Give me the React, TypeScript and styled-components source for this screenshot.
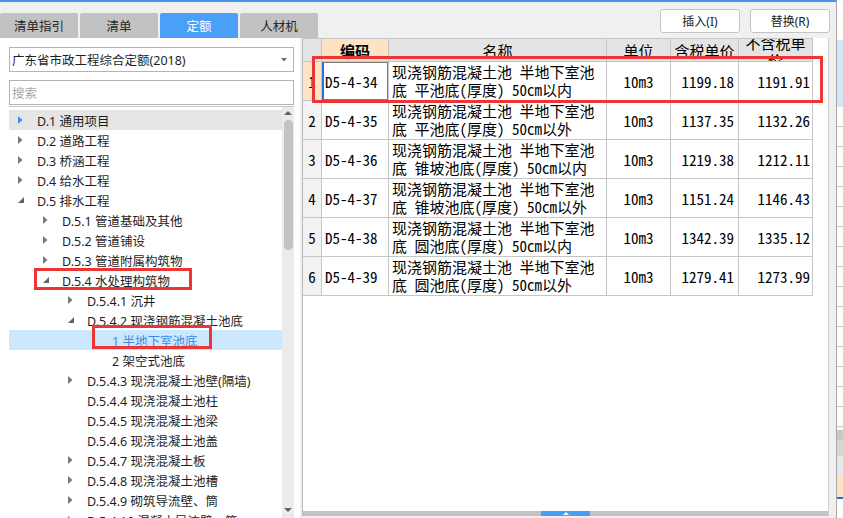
import React from "react";
import styled, { createGlobalStyle } from "styled-components";

const UI_FONT = `"Noto Sans", "Noto Sans CJK SC", sans-serif`;
const GRID_FONT = `"Noto Sans CJK SC", "Liberation Mono", monospace`;

const GlobalStyle = createGlobalStyle`
  html, body {
    margin: 0;
    padding: 0;
    overflow: hidden;
    background: #ffffff;
  }
  * {
    box-sizing: border-box;
  }
`;

const Screen = styled.div`
  position: relative;
  display: flex;
  width: 843px;
  height: 518px;
  overflow: hidden;
  font-family: ${UI_FONT};
`;

const Dialog = styled.div`
  width: 837px;
  height: 518px;
  display: flex;
  flex-direction: column;
  background: #f0f0f0;
  border-top: 2px solid #4796ee;
  border-right: 1px solid #a8a8a8;
`;

const TopBar = styled.div`
  height: 36px;
  display: flex;
  justify-content: space-between;
  padding-right: 6px;
`;

const Tabs = styled.div`
  display: flex;
  align-items: flex-end;
  gap: 2px;
`;

const Tab = styled.div<{ $active?: boolean }>`
  width: 78px;
  height: 25px;
  display: flex;
  align-items: center;
  justify-content: center;
  border-radius: 2px 2px 0 0;
  background: ${(p) => (p.$active ? "#4a9ff6" : "#c2c2c2")};
  color: ${(p) => (p.$active ? "#ffffff" : "#262626")};
  font-size: 12.5px;
`;

const Actions = styled.div`
  display: flex;
  gap: 10px;
  padding-top: 7px;
`;

const Button = styled.div`
  width: 80px;
  height: 24px;
  display: flex;
  align-items: center;
  justify-content: center;
  background: #ffffff;
  border: 1px solid #c4c4c4;
  border-radius: 3px;
  font-size: 12px;
  color: #222222;
`;

const Body = styled.div`
  flex: 1;
  display: flex;
  min-height: 0;
`;

/* left side: quota library tree */
const LeftPanel = styled.div`
  width: 300px;
  background: #ffffff;
  padding: 9px 6px 0 9px;
  display: flex;
  flex-direction: column;
  overflow: hidden;
`;

const Select = styled.div`
  height: 25px;
  border: 1px solid #b4b4b4;
  display: flex;
  align-items: center;
  justify-content: space-between;
  padding: 0 6px 0 2px;
  font-size: 12.5px;
  color: #1e1e1e;
`;

const Search = styled.div`
  height: 25px;
  margin-top: 8px;
  border: 1px solid #b4b4b4;
  display: flex;
  align-items: center;
  padding-left: 2px;
  font-size: 12.5px;
  color: #a8a8a8;
`;

const TreeBox = styled.div`
  flex: 1;
  margin-top: 1px;
  border-top: 1px solid #c8c8c8;
  display: flex;
  min-height: 0;
`;

const TreeRows = styled.div`
  flex: 1;
  padding-top: 3px;
`;

const TreeRow = styled.div<{ $level: number; $state?: "hover" | "selected" }>`
  height: 20px;
  display: flex;
  align-items: center;
  padding-left: ${(p) => 9 + p.$level * 25}px;
  background: ${(p) =>
    p.$state === "hover" ? "#e5e5e5" : p.$state === "selected" ? "#cce8ff" : "transparent"};
  color: ${(p) => (p.$state === "selected" ? "#3b8ae6" : "#1e1e1e")};
  font-size: 12.5px;
  white-space: nowrap;
`;

const Expander = styled.span`
  width: 19px;
  height: 20px;
  display: flex;
  align-items: center;
  flex-shrink: 0;
`;

const ScrollTrack = styled.div`
  width: 12px;
  background: #ebebeb;
  display: flex;
  flex-direction: column;
  align-items: center;
`;

const ScrollArrow = styled.div`
  height: 12px;
  display: flex;
  align-items: center;
  justify-content: center;
  flex-shrink: 0;
`;

const ScrollThumb = styled.div`
  width: 9px;
  height: 130px;
  margin-top: 1px;
  border-radius: 5px;
  background: #c3c3c3;
`;

const ScrollSpacer = styled.div`
  flex: 1;
`;

const ScrollEnd = styled(ScrollArrow)`
  margin-bottom: 2px;
`;

/* right side: quota list */
const RightPanel = styled.div`
  width: 527px;
  margin: 0 0 2px 2px;
  background: #ffffff;
  border-left: 1px solid #b9b9b9;
  border-right: 1px solid #cfcfcf;
  display: flex;
  flex-direction: column;
`;

const TableArea = styled.div`
  flex: 1;
  overflow: hidden;
`;

const Grid = styled.div`
  display: grid;
  grid-template-columns: 19px 67px 218px 64px 68px 74px;
  grid-template-rows: 23px;
  grid-auto-rows: 39px;
  width: 510px;
  border-top: 1px solid #c6c6c6;
  font-family: ${GRID_FONT};
  font-size: 15px;
  font-feature-settings: "hwid" 1;
  color: #000000;
`;

const Cell = styled.div`
  display: flex;
  align-items: center;
  overflow: hidden;
  white-space: nowrap;
  border-right: 1px solid #c6c6c6;
  border-bottom: 1px solid #c6c6c6;
`;

const HeadCell = styled(Cell)<{ $peach?: boolean }>`
  align-items: flex-start;
  background: ${(p) => (p.$peach ? "#fde3c3" : "#e4e4e4")};
  font-weight: ${(p) => (p.$peach ? 700 : 400)};
`;

const HeadText = styled.span<{ $shift: number }>`
  display: block;
  width: 100%;
  margin-top: ${(p) => p.$shift}px;
  line-height: 17px;
  text-align: center;
`;

const NumCell = styled(Cell)<{ $active?: boolean }>`
  justify-content: center;
  background: ${(p) => (p.$active ? "#fde5c6" : "#f2f2f2")};
`;

const CodeCell = styled(Cell)<{ $selected?: boolean }>`
  padding-left: 3px;
  box-shadow: ${(p) =>
    p.$selected ? "inset 2px 0 0 #2a72e0, inset 0 0 0 1px #7d7d7d" : "none"};
`;

const NameCell = styled(Cell)`
  flex-direction: column;
  align-items: flex-start;
  justify-content: center;
  padding-left: 3px;
  line-height: 18px;
`;

const UnitCell = styled(Cell)`
  justify-content: center;
`;

const PriceCell = styled(Cell)<{ $pad: number }>`
  justify-content: flex-end;
  padding-right: ${(p) => p.$pad}px;
`;

const BottomBar = styled.div`
  height: 5px;
  background: #c3c3c3;
  display: flex;
  justify-content: center;
`;

const Knob = styled.div`
  width: 49px;
  background: #4a9cf5;
  display: flex;
  align-items: center;
  justify-content: center;
`;

/* a slice of the window lying behind the dialog */
const Behind = styled.div`
  flex: 1;
  display: flex;
  flex-direction: column;
`;

const Slice = styled.div<{ $h: number; $bg: string; $lines?: boolean }>`
  height: ${(p) => p.$h}px;
  flex-shrink: 0;
  background: ${(p) => p.$bg};
  background-image: ${(p) =>
    p.$lines
      ? "repeating-linear-gradient(to bottom, transparent 0 19px, #c8c8c8 19px 20px)"
      : "none"};
`;

const Mark = styled.div<{ $x: number; $y: number; $w: number; $h: number }>`
  position: absolute;
  left: ${(p) => p.$x}px;
  top: ${(p) => p.$y}px;
  width: ${(p) => p.$w}px;
  height: ${(p) => p.$h}px;
  border: 3px solid #ee3535;
  pointer-events: none;
`;

type Node = {
  level: number;
  label: string;
  icon: "closed" | "open" | "none";
  state?: "hover" | "selected";
};

const tree: Node[] = [
  { level: 0, label: "D.1 通用项目", icon: "closed", state: "hover" },
  { level: 0, label: "D.2 道路工程", icon: "closed" },
  { level: 0, label: "D.3 桥涵工程", icon: "closed" },
  { level: 0, label: "D.4 给水工程", icon: "closed" },
  { level: 0, label: "D.5 排水工程", icon: "open" },
  { level: 1, label: "D.5.1 管道基础及其他", icon: "closed" },
  { level: 1, label: "D.5.2 管道铺设", icon: "closed" },
  { level: 1, label: "D.5.3 管道附属构筑物", icon: "closed" },
  { level: 1, label: "D.5.4 水处理构筑物", icon: "open" },
  { level: 2, label: "D.5.4.1 沉井", icon: "closed" },
  { level: 2, label: "D.5.4.2 现浇钢筋混凝土池底", icon: "open" },
  { level: 3, label: "1 半地下室池底", icon: "none", state: "selected" },
  { level: 3, label: "2 架空式池底", icon: "none" },
  { level: 2, label: "D.5.4.3 现浇混凝土池壁(隔墙)", icon: "closed" },
  { level: 2, label: "D.5.4.4 现浇混凝土池柱", icon: "none" },
  { level: 2, label: "D.5.4.5 现浇混凝土池梁", icon: "none" },
  { level: 2, label: "D.5.4.6 现浇混凝土池盖", icon: "none" },
  { level: 2, label: "D.5.4.7 现浇混凝土板", icon: "closed" },
  { level: 2, label: "D.5.4.8 现浇混凝土池槽", icon: "closed" },
  { level: 2, label: "D.5.4.9 砌筑导流壁、筒", icon: "closed" },
  { level: 2, label: "D.5.4.10 混凝土导流壁、筒", icon: "closed" },
];

const rows = [
  { code: "D5-4-34", kind: "平池底", side: "以内", tax: "1199.18", net: "1191.91" },
  { code: "D5-4-35", kind: "平池底", side: "以外", tax: "1137.35", net: "1132.26" },
  { code: "D5-4-36", kind: "锥坡池底", side: "以内", tax: "1219.38", net: "1212.11" },
  { code: "D5-4-37", kind: "锥坡池底", side: "以外", tax: "1151.24", net: "1146.43" },
  { code: "D5-4-38", kind: "圆池底", side: "以内", tax: "1342.39", net: "1335.12" },
  { code: "D5-4-39", kind: "圆池底", side: "以外", tax: "1279.41", net: "1273.99" },
];

function TreeIcon({ kind, blue }: { kind: Node["icon"]; blue?: boolean }) {
  if (kind === "closed") {
    return (
      <svg width="5" height="8" viewBox="0 0 5 8">
        <polygon points="0,0 4.5,4 0,8" fill={blue ? "#3c8ee8" : "#7a7a7a"} />
      </svg>
    );
  }
  if (kind === "open") {
    return (
      <svg width="6" height="6" viewBox="0 0 6 6">
        <polygon points="6,0 6,6 0,6" fill="#646464" />
      </svg>
    );
  }
  return null;
}

export default function App() {
  return (
    <Screen>
      <GlobalStyle />
      <Dialog>
        <TopBar>
          <Tabs>
            <Tab>清单指引</Tab>
            <Tab>清单</Tab>
            <Tab $active>定额</Tab>
            <Tab>人材机</Tab>
          </Tabs>
          <Actions>
            <Button>插入(I)</Button>
            <Button>替换(R)</Button>
          </Actions>
        </TopBar>
        <Body>
          <LeftPanel>
            <Select>
              <span>广东省市政工程综合定额(2018)</span>
              <svg width="6" height="4" viewBox="0 0 6 4">
                <polygon points="0,0 6,0 3,3.5" fill="#707070" />
              </svg>
            </Select>
            <Search>搜索</Search>
            <TreeBox>
              <TreeRows>
                {tree.map((n) => (
                  <TreeRow key={n.label} $level={n.level} $state={n.state}>
                    <Expander>
                      <TreeIcon kind={n.icon} blue={n.state === "hover"} />
                    </Expander>
                    {n.label}
                  </TreeRow>
                ))}
              </TreeRows>
              <ScrollTrack>
                <ScrollArrow>
                  <svg width="8" height="4" viewBox="0 0 8 4">
                    <polygon points="0,4 4,0 8,4" fill="#606060" />
                  </svg>
                </ScrollArrow>
                <ScrollThumb />
                <ScrollSpacer />
                <ScrollEnd>
                  <svg width="8" height="4" viewBox="0 0 8 4">
                    <polygon points="0,0 8,0 4,4" fill="#606060" />
                  </svg>
                </ScrollEnd>
              </ScrollTrack>
            </TreeBox>
          </LeftPanel>
          <RightPanel>
            <TableArea>
              <Grid>
                <HeadCell />
                <HeadCell $peach>
                  <HeadText $shift={3}>编码</HeadText>
                </HeadCell>
                <HeadCell>
                  <HeadText $shift={3}>名称</HeadText>
                </HeadCell>
                <HeadCell>
                  <HeadText $shift={3}>单位</HeadText>
                </HeadCell>
                <HeadCell>
                  <HeadText $shift={3}>含税单价</HeadText>
                </HeadCell>
                <HeadCell>
                  <HeadText $shift={-5}>
                    不含税单
                    <br />价
                  </HeadText>
                </HeadCell>
                {rows.map((r, i) => (
                  <React.Fragment key={r.code}>
                    <NumCell $active={i === 0}>{i + 1}</NumCell>
                    <CodeCell $selected={i === 0}>{r.code}</CodeCell>
                    <NameCell>
                      <span>现浇钢筋混凝土池 半地下室池</span>
                      <span>
                        底 {r.kind}(厚度) 50cm{r.side}
                      </span>
                    </NameCell>
                    <UnitCell>10m3</UnitCell>
                    <PriceCell $pad={4}>{r.tax}</PriceCell>
                    <PriceCell $pad={2}>{r.net}</PriceCell>
                  </React.Fragment>
                ))}
              </Grid>
            </TableArea>
            <BottomBar>
              <Knob>
                <svg width="6" height="3" viewBox="0 0 6 3">
                  <polygon points="0,3 3,0 6,3" fill="#ffffff" />
                </svg>
              </Knob>
            </BottomBar>
          </RightPanel>
        </Body>
      </Dialog>
      <Behind>
        <Slice $h={40} $bg="#ffffff" />
        <Slice $h={67} $bg="#d5e8f8" />
        <Slice $h={323} $bg="#ffffff" $lines />
        <Slice $h={10} $bg="#c8c8c8" />
        <Slice $h={16} $bg="#d6d6d6" />
        <Slice $h={19} $bg="#e8e8e8" />
        <Slice $h={22} $bg="#fde3c4" />
        <Slice $h={2} $bg="#2a6fd6" />
        <Slice $h={19} $bg="#ffffff" />
      </Behind>
      <Mark $x={34} $y={268} $w={158} $h={22} />
      <Mark $x={92} $y={325} $w={120} $h={24} />
      <Mark $x={312} $y={56} $w={511} $h={47} />
    </Screen>
  );
}
